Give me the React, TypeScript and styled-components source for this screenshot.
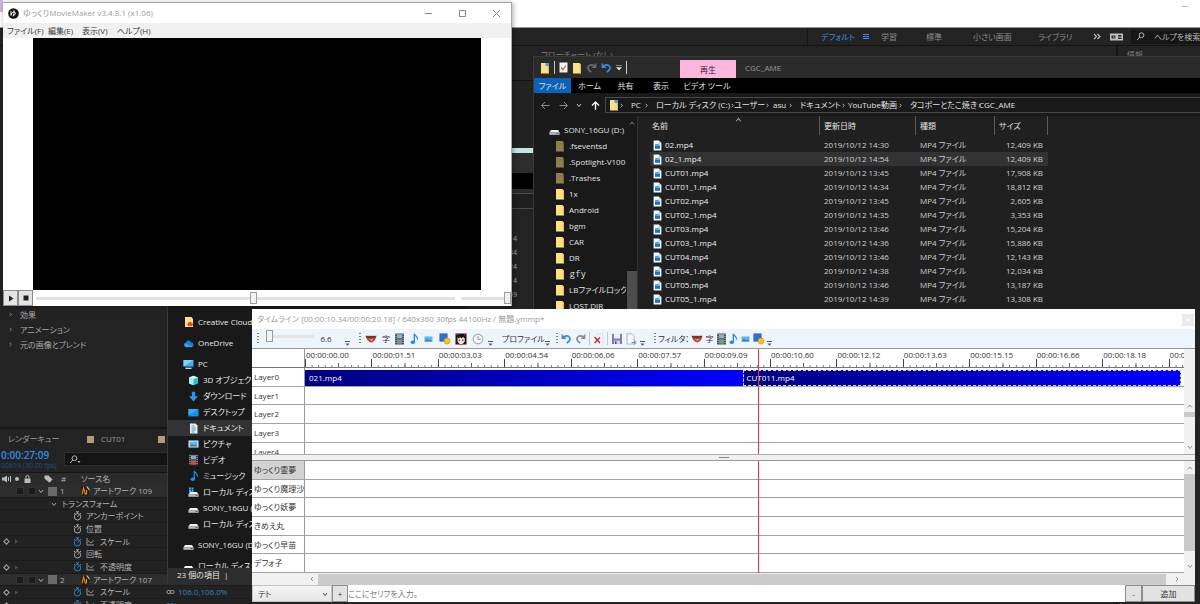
import React from "react";
import styled, { createGlobalStyle, css } from "styled-components";

const Global = createGlobalStyle`
  *, *::before, *::after { box-sizing: border-box; }
  body { margin: 0; background: #1b1b1b; }
  body, button, input, select, table {
    font-family: "Open Sans", "Noto Sans CJK JP", sans-serif;
    font-size: 8px;
    line-height: 12px;
    font-feature-settings: "palt";
  }
  button, input, select { margin: 0; padding: 0; border: 0; border-radius: 0; color: inherit; background: none; }
  ul, ol { margin: 0; padding: 0; list-style: none; }
  h1, h2 { margin: 0; font-size: inherit; font-weight: 400; }
  svg { display: block; flex: none; }
`;

/* ---------- desktop ---------- */

const Desktop = styled.main`
  position: relative;
  height: 100vh;
  min-height: 560px;
  overflow: hidden;
  background: #232323;
  white-space: nowrap;
`;

/* ---------- compositing application ---------- */

const Studio = styled.section`
  display: flex;
  flex-direction: column;
  height: 100%;
  color: #9a9a9a;
`;

const StudioTitle = styled.header`
  display: flex;
  flex: none;
  justify-content: space-between;
  height: 28px;
  padding-right: 12px;
  background: #fff;
  border-bottom: 1px solid #8f9a94;
`;

const StudioMark = styled.span`
  width: 3px;
  height: 12px;
  background: #cdb8dc;
`;

const MinimizeMark = styled.span`
  width: 6px;
  height: 1px;
  margin-top: 6px;
  background: #b5b5b5;
`;

const WorkspaceBar = styled.nav`
  display: flex;
  flex: none;
  align-items: center;
  justify-content: flex-end;
  height: 18px;
  background: #232323;
  border-bottom: 1px solid #141414;
`;

const Workspace = styled.button<{ $w: number; $active?: boolean }>`
  display: flex;
  align-items: center;
  gap: 8px;
  width: ${(p) => p.$w}px;
  color: ${(p) => (p.$active ? "#3a8ee6" : "#8c8c8c")};
`;

const WorkspaceDivider = styled.span`
  width: 1px;
  height: 17px;
  margin-right: 13px;
  background: #171717;
`;

const HelpSearch = styled.label`
  display: flex;
  align-items: center;
  gap: 6px;
  width: 69px;
  height: 14px;
  padding-left: 5px;
  background: #161616;
  color: #b4b4b4;
  input { width: 48px; outline: 0; }
  input::placeholder { color: #b4b4b4; opacity: 1; }
`;

const StudioBody = styled.div`
  display: flex;
  flex: 1;
  min-height: 0;
`;

const StudioLeft = styled.div`
  display: flex;
  flex: none;
  flex-direction: column;
  width: 252px;
`;

const EffectPanel = styled.ul`
  flex: none;
  height: 383px;
  padding: 261px 0 0 8px;
  border-bottom: 2px solid #151515;
  li {
    display: flex;
    align-items: center;
    gap: 7px;
    height: 15px;
    color: #a8a8a8;
  }
`;

const CompTabs = styled.div`
  display: flex;
  flex: none;
  align-items: center;
  height: 20px;
  padding-left: 8px;
`;

const CompTab = styled.span<{ $w: number }>`
  display: flex;
  align-items: center;
  gap: 7px;
  width: ${(p) => p.$w}px;
`;

const Swatch = styled.i`
  width: 7px;
  height: 7px;
  background: #b39b78;
`;

const TimeHead = styled.div`
  display: flex;
  flex: none;
  height: 23px;
`;

const TimeCode = styled.div`
  width: 64px;
  padding-left: 1px;
  font-size: 10px;
  font-weight: 600;
  line-height: 13px;
  color: #2f8fe8;
  small {
    display: block;
    font-size: 7px;
    font-weight: 400;
    line-height: 8px;
    color: #1f4f80;
  }
`;

const LayerSearch = styled.label`
  display: flex;
  align-items: center;
  width: 104px;
  height: 14px;
  margin-top: 3px;
  padding-left: 4px;
  background: #141414;
  border: 1px solid #2e2e2e;
  color: #b4b4b4;
  input { width: 80px; outline: 0; }
`;

const LayerHeader = styled.div`
  display: flex;
  flex: none;
  align-items: center;
  height: 13px;
  padding-left: 2px;
  background: #2b2b2b;
  border-top: 1px solid #151515;
  color: #b0b0b0;
`;

const HeadCell = styled.span<{ $w: number }>`
  display: flex;
  width: ${(p) => p.$w}px;
`;

const LayerList = styled.ul`
  display: grid;
  grid-auto-rows: 13px 12px 13px;
  color: #b4b4b4;
`;

const LayerItem = styled.li<{ $indent: number; $solid?: boolean }>`
  display: flex;
  align-items: center;
  padding-left: 2px;
  background: ${(p) => (p.$solid ? "#2d2d2d" : "#222")};
  border-bottom: 1px solid #1b1b1b;
`;

const KeyCell = styled.span<{ $w: number }>`
  display: flex;
  flex: none;
  align-items: center;
  gap: 4px;
  width: ${(p) => p.$w}px;
`;

const LayerName = styled.span`
  width: 66px;
`;

const LayerValue = styled.span`
  display: flex;
  align-items: center;
  gap: 3px;
  color: #2f80c8;
`;

const Box = styled.i`
  width: 8px;
  height: 8px;
  background: #1c1c1c;
  border: 1px solid #333;
`;

const LayerColor = styled.i`
  width: 9px;
  height: 9px;
  background: #6a6a6a;
`;

const CompViewer = styled.div`
  flex: 1;
  min-width: 0;
`;

const FlowTab = styled.div`
  height: 35px;
  padding: 3px 0 0 289px;
  color: #7d7d7d;
  border-bottom: 1px solid #121212;
`;

const Band = styled.div<{ $h: number; $c: string }>`
  height: ${(p) => p.$h}px;
  background: ${(p) => p.$c};
`;

const Frames = styled.ul`
  width: 265px;
  padding-top: 24px;
  text-align: right;
  li { height: 14px; font-size: 7px; color: #a8a8a8; }
`;

const InfoPanel = styled.div`
  width: 84px;
  padding: 3px 0 0 9px;
  border-left: 2px solid #151515;
  color: #7d7d7d;
`;

/* ---------- file explorers ---------- */

const Explorer = styled.section`
  position: absolute;
  top: 56px;
  right: 0;
  left: 533px;
  height: 254px;
  display: flex;
  flex-direction: column;
  overflow: hidden;
  background: #191919;
  border-top: 1px solid #3a3a3a;
  border-left: 1px solid #3a3a3a;
  color: #e2e2e2;
`;

const ExplorerTitle = styled.header`
  display: flex;
  flex: none;
  align-items: center;
  height: 21px;
  background: #2b2b2b;
`;

const QuickAccess = styled.div`
  display: flex;
  align-items: center;
  gap: 4px;
  width: 146px;
  padding-left: 6px;
`;

const ContextTab = styled.span`
  align-self: flex-end;
  width: 56px;
  height: 18px;
  line-height: 19px;
  text-align: center;
  background: #ffb6dc;
  color: #33202b;
`;

const FolderTitle = styled.h2`
  padding-left: 9px;
  color: #9a9a9a;
`;

const Ribbon = styled.nav`
  display: flex;
  flex: none;
  height: 15px;
  background: #000;
`;

const RibbonTab = styled.button<{ $w: number; $file?: boolean }>`
  width: ${(p) => p.$w}px;
  background: ${(p) => (p.$file ? "#0a63b8" : "none")};
  text-align: center;
`;

const AddressRow = styled.div`
  display: flex;
  flex: none;
  align-items: center;
  height: 16px;
  margin: 4px 0 3px;
`;

const NavArrows = styled.div`
  display: flex;
  align-items: center;
  justify-content: space-between;
  width: 71px;
  padding: 0 5px 0 7px;
`;

const Address = styled.ol`
  display: flex;
  flex: 1;
  align-items: center;
  height: 16px;
  padding-left: 3px;
  border: 1px solid #484848;
  border-right: 0;
`;

const Crumb = styled.li<{ $w: number }>`
  display: flex;
  flex: none;
  align-items: center;
  justify-content: space-between;
  width: ${(p) => p.$w}px;
  padding-right: 7px;
  a { color: inherit; text-decoration: none; }
`;

const ExplorerBody = styled.div`
  display: flex;
  flex: 1;
  min-height: 0;
`;

const Tree = styled.div`
  display: flex;
  flex: none;
  width: 104px;
  border-right: 1px solid #303030;
`;

const TreeList = styled.ul`
  width: 92px;
  padding-top: 6px;
  overflow: hidden;
`;

const TreeItem = styled.li<{ $indent: number; $gap?: boolean; $on?: boolean }>`
  display: flex;
  align-items: center;
  gap: 4px;
  height: 16px;
  margin-top: ${(p) => (p.$gap ? 5 : 0)}px;
  padding-left: ${(p) => p.$indent}px;
  background: ${(p) => (p.$on ? "#333" : "none")};
`;

const TreeScroll = styled.div`
  display: flex;
  flex-direction: column;
  justify-content: space-between;
  align-items: center;
  width: 11px;
  padding-top: 4px;
  color: #8a8a8a;
`;

const TreeThumb = styled.i`
  width: 10px;
  height: 39px;
  background: #4d4d4d;
`;

const FilePane = styled.div`
  flex: 1;
  padding-left: 12px;
  background: #202020;
`;

const FileTable = styled.table`
  width: 398px;
  table-layout: fixed;
  border-collapse: collapse;
  td, th { padding: 0; text-align: left; font-weight: 400; }
  th { height: 22px; vertical-align: top; }
  td { height: 14px; color: #cfcfcf; padding-left: 4px; }
  td:first-child { padding-left: 3px; color: #ececec; }
  td:last-child { text-align: right; padding: 0 5px 0 0; }
`;

const HeadLabel = styled.div<{ $first?: boolean }>`
  position: relative;
  height: 19px;
  padding: 4px 0 0 ${(p) => (p.$first ? 2 : 4)}px;
  border-right: 1px solid #5a5a5a;
`;

const SortMark = styled.span`
  position: absolute;
  top: 0;
  left: 50%;
  color: #a0a0a0;
`;

const FileRow = styled.tr<{ $on?: boolean }>`
  background: ${(p) => (p.$on ? "#333" : "none")};
`;

const FileName = styled.span`
  display: flex;
  align-items: center;
  gap: 3px;
`;

const SideExplorer = styled.section`
  position: absolute;
  top: 300px;
  bottom: 21px;
  left: 167px;
  width: 300px;
  display: flex;
  flex-direction: column;
  background: #191919;
  border-left: 1px solid #3a3a3a;
  color: #e6e6e6;
`;

const SideList = styled.ul`
  flex: 1;
  min-height: 0;
  padding-top: 9px;
  overflow: hidden;
`;

const StatusBar = styled.footer`
  flex: none;
  height: 15px;
  padding-left: 9px;
  line-height: 14px;
  background: #2d2d2d;
`;

/* ---------- player window ---------- */

const Player = styled.section`
  position: absolute;
  top: 2px;
  left: 3px;
  width: 509px;
  display: flex;
  flex-direction: column;
  background: #fff;
  border: 1px solid #a8a8a8;
  border-bottom: 0;
  border-left: 0;
  box-shadow: 1px 1px 5px rgba(0, 0, 0, 0.35);
`;

const PlayerTitle = styled.header`
  display: flex;
  align-items: center;
  gap: 4px;
  height: 20px;
  padding: 0 9px 0 5px;
  color: #9b9b9b;
  h1 { flex: 1; }
`;

const WindowButton = styled.button`
  display: grid;
  width: 30px;
  height: 20px;
  place-items: center;
  color: #888;
  &:last-child { margin-right: -9px; }
`;

const MenuBar = styled.nav`
  display: flex;
  height: 15px;
  padding-left: 4px;
  background: #f0f0f0;
  color: #3a3a3a;
`;

const MenuButton = styled.button<{ $w: number }>`
  width: ${(p) => p.$w}px;
  text-align: left;
`;

const Stage = styled.div`
  height: 252px;
  margin: 0 30px;
  background: #000;
`;

const Transport = styled.div`
  display: flex;
  align-items: center;
  height: 16px;
  background: #fff;
`;

const SquareButton = styled.button`
  display: grid;
  width: 15px;
  height: 16px;
  place-items: center;
  background: #e4e4e4;
  border: 1px solid #8d8d8d;
`;

const Slider = styled.input<{ $h?: number }>`
  appearance: none;
  min-width: 0;
  height: 14px;
  outline: 0;
  &::-webkit-slider-runnable-track {
    height: 3px;
    background: #e3e3e3;
  }
  &::-webkit-slider-thumb {
    appearance: none;
    width: 7px;
    height: 12px;
    margin-top: -5px;
    background: #f2f2f2;
    border: 1px solid #9c9c9c;
  }
`;

const SeekSlider = styled(Slider)`
  flex: 1;
  margin-left: 3px;
`;

const VolumeSlider = styled(Slider)`
  width: 50px;
  margin-left: 6px;
`;

/* ---------- timeline window ---------- */

const Timeline = styled.section`
  position: absolute;
  top: 309px;
  right: 5px;
  bottom: 2px;
  left: 252px;
  display: flex;
  flex-direction: column;
  background: #fff;
  color: #333;
`;

const TimelineTitle = styled.header`
  display: flex;
  flex: none;
  align-items: center;
  justify-content: space-between;
  height: 20px;
  padding: 0 1px 1px 5px;
  color: #9b9b9b;
`;

const CloseButton = styled.button`
  display: grid;
  place-items: center;
  width: 12px;
  height: 12px;
  margin-top: 2px;
  background: #e9e9e9;
  color: #f8f8f8;
`;

const Toolbar = styled.div`
  display: flex;
  flex: none;
  height: 19px;
  background: #edf4fc;
`;

const ToolGroup = styled.div<{ $w: number }>`
  display: flex;
  flex: none;
  align-items: center;
  justify-content: space-between;
  width: ${(p) => p.$w}px;
  padding: 0 4px 0 5px;
`;

const Grip = styled.i`
  width: 2px;
  height: 12px;
  background: repeating-linear-gradient(#7a7f88 0 1px, transparent 1px 3px);
`;

const ToolButton = styled.button`
  display: grid;
  place-items: center;
  height: 14px;
  color: #333;
`;

const ToolRule = styled.i`
  width: 1px;
  height: 13px;
  background: #c3c8ce;
`;

const More = styled.span`
  align-self: flex-end;
  margin-bottom: 2px;
`;

const ZoomSlider = styled(Slider)`
  width: 48px;
  margin-top: -4px;
`;

const Pane = styled.div<{ $fill?: boolean }>`
  position: relative;
  display: flex;
  ${(p) => (p.$fill ? css`flex: 1; min-height: 0;` : css`flex: none; height: 106px;`)}
  overflow: hidden;
  border-top: 1px solid #999;
`;

const Tracks = styled.div`
  position: relative;
  flex: 1;
  min-width: 0;
  overflow: hidden;
`;

const RulerRow = styled.div`
  display: flex;
  height: 19px;
  border-bottom: 1px solid #777;
  overflow: hidden;
`;

const LabelCell = styled.div<{ $on?: boolean }>`
  flex: none;
  width: 53px;
  padding: 3px 0 0 2px;
  border-right: 1px solid #9a9a9a;
  background: ${(p) => (p.$on ? "#d2d2d2" : "#fff")};
  overflow: hidden;
`;

const Ruler = styled.div`
  display: grid;
  flex: 1;
  grid-template-columns: repeat(14, 1fr);
  min-width: 0;
  margin-right: -51px;
`;

const RulerMark = styled.span`
  min-width: 0;
  padding-left: 1px;
  color: #333;
  background:
    linear-gradient(90deg, #444 1px, transparent 1px) 0 100% / 100% 8px repeat-x,
    linear-gradient(90deg, #666 1px, transparent 1px) 0 100% / 50% 4px repeat-x,
    linear-gradient(90deg, #777 1px, transparent 1px) 0 100% / 10% 2px repeat-x;
`;

const Rows = styled.div`
  display: grid;
  grid-auto-rows: 19px 18px 19px;
`;

const Row = styled.div`
  display: flex;
  border-bottom: 1px solid #a3a3a3;
`;

const Lane = styled.div`
  display: flex;
  flex: 1;
  padding: 2px 3px 0 0;
`;

const Clip = styled.button<{ $dashed?: boolean }>`
  flex: 1;
  padding-left: ${(p) => (p.$dashed ? 3 : 4)}px;
  text-align: left;
  color: #fff;
  background: linear-gradient(90deg, #00007f, #0000ff);
  ${(p) => p.$dashed && css`border: 1px dashed #d8d8ff;`}
`;

const PlayArea = styled.div`
  position: absolute;
  top: 0;
  right: 0;
  bottom: 0;
  left: 53px;
  pointer-events: none;
`;

const Playhead = styled.i`
  position: absolute;
  top: 0;
  bottom: 0;
  left: 51.5%;
  width: 1px;
  background: #e8323c;
`;

const VScroll = styled.div`
  display: flex;
  flex: none;
  flex-direction: column;
  align-items: center;
  width: 11px;
  padding: 4px 0;
  background: #f0f0f0;
  color: #8a8a8a;
`;

const VThumb = styled.i<{ $h: number }>`
  width: 11px;
  height: ${(p) => p.$h}px;
  margin: 3px 0 auto;
  background: #c9c9c9;
`;

const Splitter = styled.div`
  display: grid;
  place-items: center;
  flex: none;
  height: 6px;
  background: #f0f0f0;
  border-top: 1px solid #aaa;
  i { width: 10px; height: 1px; background: #888; }
`;

const HScroll = styled.div`
  display: flex;
  flex: none;
  align-items: center;
  justify-content: space-between;
  height: 12px;
  padding: 0 15px 0 57px;
  background: #f0f0f0;
  color: #8a8a8a;
`;

const HThumb = styled.i`
  flex: 1;
  height: 11px;
  margin: 0 8px 0 3px;
  background: #cbcbcb;
`;

const Composer = styled.form`
  display: flex;
  flex: none;
  height: 17px;
  background: #fff;
`;

const VoiceBox = styled.label`
  position: relative;
  width: 80px;
  select {
    appearance: none;
    width: 100%;
    height: 17px;
    padding-left: 5px;
    background: linear-gradient(#f4f4f4, #e6e6e6);
    border: 1px solid #c4c4c4;
  }
  svg { position: absolute; top: 6px; right: 4px; }
`;

const FormButton = styled.button<{ $w: number }>`
  width: ${(p) => p.$w}px;
  background: #e2e2e2;
  border: 1px solid #8d8d8d;
  text-align: center;
`;

const SerifInput = styled.input`
  flex: 1;
  min-width: 0;
  outline: 0;
  &::placeholder { color: #777; opacity: 1; }
`;

/* ---------- icons ---------- */

const Chevron = ({ dir, size = 6 }: { dir: "up" | "down" | "left" | "right"; size?: number }) => {
  const d = { up: "M1 4.5 3 2 5 4.5", down: "M1 2 3 4.5 5 2", left: "M4 1 2 3 4 5", right: "M2 1 4 3 2 5" }[dir];
  return (
    <svg width={size} height={size} viewBox="0 0 6 6" fill="none" stroke="currentColor" strokeWidth="0.9">
      <path d={d} />
    </svg>
  );
};

const Magnifier = ({ menu }: { menu?: boolean }) => (
  <svg width="12" height="9" viewBox="0 0 12 9" fill="none" stroke="currentColor">
    <circle cx="5.5" cy="3.2" r="2.4" />
    <path d="M3.8 5 1.2 8" />
    {menu && <path d="M8.5 6h3L10 8z" fill="currentColor" stroke="none" />}
  </svg>
);

const YuBadge = () => (
  <svg width="11" height="11" viewBox="0 0 11 11">
    <circle cx="5.5" cy="5.5" r="5.3" fill="#111" />
    <path d="M3 3.2v4.2c.2-2 1.2-3.4 3-3.4s2.4 3-.6 3M5.8 2.5c.5 2 .3 4-.8 5.8" fill="none" stroke="#fff" strokeWidth="1" />
  </svg>
);

const Folder = ({ dim, page }: { dim?: boolean; page?: boolean }) => (
  <svg width="10" height="12" viewBox="0 0 10 12">
    <path d="M1 1h6.5L9 3v8.4H1z" fill={dim ? "#8d7f4f" : "#ffe08a"} />
    <path d="M7.5 1 9 3v8.4l-1.2-1z" fill={dim ? "#77693d" : "#eebf4c"} />
    {page && <path d="M5.5 1H9v3H5.5z" fill="#3ea1e0" />}
  </svg>
);

const Drive = ({ win }: { win?: boolean }) => (
  <svg width="11" height="11" viewBox="0 0 11 11">
    {win && <path d="M1 .5h2v2H1zM3.5.5h2v2h-2zM1 3h2v2H1zM3.5 3h2v2h-2z" fill="#27b5f5" />}
    <path d="M2 5h7l1.6 2.6H.4z" fill="#f1f1f1" />
    <path d="M.4 7.4h10.2v2.4H.4z" fill="#bcbcbc" />
    <path d="M7.5 8.2h2v.8h-2z" fill="#444" />
  </svg>
);

const VideoFile = () => (
  <svg width="9" height="11" viewBox="0 0 9 11">
    <path d="M.6.5h5.2l2.6 2.6v7.4H.6z" fill="#f4f8fb" />
    <path d="M5.8.5v2.6h2.6z" fill="#a9c6dc" />
    <path d="M2 4.5 6.5 3.6v1L2 5.3z" fill="#2a86cf" />
    <path d="M2 5.4h5v3.4H2z" fill="#1673c4" />
  </svg>
);

const CloudFolder = () => (
  <svg width="10" height="12" viewBox="0 0 10 12">
    <path d="M1 1h6.5L9 3v8H1z" fill="#ffe08a" />
    <path d="M4.5 6.5c1-1.4 2.8-.9 3 .2 1.8-.1 1.9 3.3 0 3.3H5c-1.8 0-1.9-2.5-.5-3.5z" fill="#e04a26" />
  </svg>
);

const OneDrive = () => (
  <svg width="11" height="9" viewBox="0 0 11 9">
    <path d="M3 8.2a2.6 2.6 0 0 1 0-4.8C4 1 7 .8 7.9 3.3c3.3.1 3.5 4.9.3 4.9z" fill="#1482d8" />
    <path d="M2 4 9.5 8H3A2.4 2.4 0 0 1 2 4z" fill="#35a8f0" />
  </svg>
);

const Computer = () => (
  <svg width="11" height="11" viewBox="0 0 11 11">
    <path d="M.5 1h10v6.6H.5z" fill="#35b3f2" />
    <path d="M.5 1h10L.5 7.6z" fill="#7cd3fb" />
    <path d="M2.5 8.6h6v1.4h-6z" fill="#c0d3de" />
  </svg>
);

const Cube = () => (
  <svg width="11" height="11" viewBox="0 0 11 11">
    <path d="M1 2.5 5.5.7 10 2.5v6L5.5 10.3 1 8.500z" fill="#32bcd0" />
    <path d="M1 2.500 5.5 4v6.300L1 8.500z" fill="#a5f0f2" />
    <path d="M1 2.500 5.500.7 10 2.500 5.500 4z" fill="#d9fbfb" />
  </svg>
);

const Download = () => (
  <svg width="11" height="11" viewBox="0 0 11 11">
    <path d="M3.8.8h3.400v4.400h2.800L5.500 10.400 1 5.200h2.800z" fill="#3391f0" />
  </svg>
);

const Screen = () => (
  <svg width="11" height="11" viewBox="0 0 11 11">
    <path d="M.5 2h10v7.400H.5z" fill="#1494e8" />
    <path d="M.5 2h10L.5 8z" fill="#35aff5" />
  </svg>
);

const DocPage = () => (
  <svg width="11" height="11" viewBox="0 0 11 11">
    <path d="M2 .5h5.500L9.500 2.500v8H2z" fill="#e8f1f7" />
    <path d="M3.500 3h3M3.500 5h4.500M3.500 7h4.500M3.500 9h3" stroke="#4e94c4" />
  </svg>
);

const Photo = () => (
  <svg width="11" height="10" viewBox="0 0 11 10">
    <path d="M.5 1.500h10v7H.5z" fill="#e9f4fb" />
    <path d="M1.500 2.500h8v5h-8z" fill="#5db8ea" />
    <path d="M1.500 7.500 4 4.800l2 1.700 1.500-1 2 2z" fill="#3a7fa8" />
  </svg>
);

const Film = ({ plain }: { plain?: boolean }) => (
  <svg width="11" height="12" viewBox="0 0 11 12">
    <path d="M1 .5h9v11H1z" fill={plain ? "#48525c" : "#343434"} />
    <path d="M3 1.300h5v4H3z" fill={plain ? "#8fb4c6" : "#7fa9d8"} />
    <path d="M3 6.300h5v4.400H3z" fill={plain ? "#7b9a8c" : "#b4584e"} />
    <path d="M1.900 1v10M9.100 1v10" stroke="#e0e0e0" strokeWidth=".8" strokeDasharray="1 1" />
  </svg>
);

const Note = () => (
  <svg width="9" height="12" viewBox="0 0 9 12">
    <ellipse cx="2.800" cy="9.300" rx="2.200" ry="1.800" fill="#1d8be8" />
    <path d="M4.300 9.300V.8c.4 2 3.800 2.400 3.300 5.800" fill="none" stroke="#1d8be8" strokeWidth="1.300" />
  </svg>
);

const Mouth = () => (
  <svg width="12" height="8" viewBox="0 0 12 8">
    <path d="M.5.800h11C11 4.500 8.500 7.500 6.500 7.400 4 7.500 1.500 5 .5.800z" fill="#b84e3e" />
    <path d="M.5.800 4 1.500l2-.6 2 .6L11.500.800l-2 1.900h-7z" fill="#5e2c28" />
    <path d="M4 4.200h4.500L6.800 6z" fill="#e89b86" />
  </svg>
);

const Shapes = () => (
  <svg width="12" height="12" viewBox="0 0 12 12">
    <path d="M.8.800h7.400v7.400H.8z" fill="#2f6fe0" stroke="#1c4aa8" strokeWidth=".6" />
    <circle cx="8" cy="8" r="3" fill="#ffc21a" stroke="#c98500" strokeWidth=".6" />
  </svg>
);

const Face = () => (
  <svg width="12" height="12" viewBox="0 0 12 12">
    <path d="M.5.500h11v11H.5z" fill="#1d1414" />
    <path d="M2.500 4.500 4 5.500 5 4l1.500 1.400L8 4l1.800 1.500v3L7.500 11h-3L2.500 8.500z" fill="#fbe0d2" />
    <path d="M3.600 6.500h1.200v1.400H3.600zM7.200 6.500h1.200v1.400H7.200z" fill="#702020" />
    <path d="M1 1.500 3 .6v2zM11 1.500 9 .6v2zM4.500 11h3v.5h-3z" fill="#d8282c" />
  </svg>
);

const Clock = () => (
  <svg width="12" height="12" viewBox="0 0 12 12">
    <circle cx="6" cy="6" r="4.900" fill="#f3f6fa" stroke="#a5adb8" strokeWidth="1.100" />
    <path d="M6 2.800V6.300H8.800" fill="none" stroke="#8b94a3" />
  </svg>
);

const Turn = ({ color, flip }: { color: string; flip?: boolean }) => (
  <svg width="11" height="11" viewBox="0 0 11 11">
    <g transform={flip ? "matrix(-1 0 0 1 11 0)" : undefined}>
      <path d="M3 3.800c3.200-2 6.200-.4 6 2.200-.1 1.800-1.500 3-3.300 4" fill="none" stroke={color} strokeWidth="1.700" />
      <path d="M.6.800v5.200h5z" fill={color} />
    </g>
  </svg>
);

const DeleteMark = () => (
  <svg width="11" height="11" viewBox="0 0 11 11">
    <path d="M1.500 4 7 10M7 4.500 1.500 10" stroke="#c8222a" strokeWidth="1.300" />
    <path d="M4 1h6v9.500" fill="none" stroke="#b8bec8" strokeDasharray="1 1.500" />
  </svg>
);

const Disk = () => (
  <svg width="12" height="12" viewBox="0 0 12 12">
    <path d="M1 1h10v10H1z" fill="#8a76b4" />
    <path d="M3 1h6v4.500H3z" fill="#f1f1f6" />
    <path d="M3 7.500h6V11H3z" fill="#cfd3e4" />
    <path d="M4 8.300h1.500V11H4z" fill="#5a4a86" />
  </svg>
);

const ExportPage = () => (
  <svg width="11" height="12" viewBox="0 0 11 12">
    <path d="M1 .8h5l2.200 2.200v8H1z" fill="#f7f9fc" stroke="#9aa6ba" strokeWidth=".8" />
    <path d="M5.500 9.500h3.500M8 7.500l2.200 2-2.200 2" fill="none" stroke="#6d86b8" />
  </svg>
);

const MoreMark = () => (
  <svg width="5" height="5" viewBox="0 0 5 5">
    <path d="M0 .5h5" stroke="#555" />
    <path d="M.5 2.500h4L2.500 4.800z" fill="#555" />
  </svg>
);

const Arrow = ({ dir, bright }: { dir: "left" | "right" | "up"; bright?: boolean }) => (
  <svg width="9" height="9" viewBox="0 0 9 9" fill="none" stroke={bright ? "#f4f4f4" : "#8e8e8e"} strokeWidth={bright ? 1.400 : 1}>
    <path d={{ left: "M8.500 4.500h-8M4 1 .7 4.500 4 8", right: "M.5 4.500h8M5 1l3.300 3.500L5 8", up: "M4.500 8.800V1M1 4.500 4.500 1 8 4.500" }[dir]} />
  </svg>
);

const CheckPage = () => (
  <svg width="9" height="11" viewBox="0 0 9 11">
    <path d="M.5.500h8v10h-8z" fill="#f3f3f3" />
    <path d="M2 5.500 4 7.500 7 3.500" fill="none" stroke="#d05a3a" strokeWidth="1.200" />
  </svg>
);

const Stopwatch = ({ on }: { on?: boolean }) => (
  <svg width="9" height="10" viewBox="0 0 9 10" fill="none" stroke={on ? "#2f80c8" : "#a8a8a8"}>
    <circle cx="4.500" cy="5.800" r="3.200" />
    <path d="M3 .800h3M4.500 1v1.500M1 2l1 1M8 2 7 3M4.500 5.800 6 4.200" />
  </svg>
);

const Graph = () => (
  <svg width="8" height="8" viewBox="0 0 8 8" fill="none" stroke="#9a9a9a">
    <path d="M1 0v7h7M2 3c2 0 2 2 3 2s1-2 2.500-2.500" />
  </svg>
);

const KeyNav = () => (
  <svg width="18" height="7" viewBox="0 0 18 7">
    <path d="M4.500.800 7.200 3.500 4.500 6.200 1.800 3.500z" fill="none" stroke="#9a9a9a" strokeWidth="1.100" />
    <path d="M13 1.500v4L16 3.500z" fill="#555" />
  </svg>
);

const ArtFile = () => (
  <svg width="10" height="10" viewBox="0 0 10 10">
    <path d="M1 .500h5.500L9 3v6.500H1z" fill="#2a1a08" />
    <path d="M2 8.500 3.500 2l2 6.500M6.500 4v4.500" fill="none" stroke="#f08a1c" strokeWidth="1.100" />
    <path d="M6 .500h1.500L9.500 3v2z" fill="#b9c6cf" />
  </svg>
);

const LinkMark = () => (
  <svg width="9" height="6" viewBox="0 0 9 6" fill="none" stroke="#a0a0a0">
    <ellipse cx="2.800" cy="3" rx="2" ry="1.600" />
    <ellipse cx="6.200" cy="3" rx="2" ry="1.600" />
  </svg>
);

/* ---------- data ---------- */

const files: [string, string, string][] = [
  ["02.mp4", "14:30", "12,409 KB"],
  ["02_1.mp4", "14:54", "12,409 KB"],
  ["CUT01.mp4", "13:45", "17,908 KB"],
  ["CUT01_1.mp4", "14:34", "18,812 KB"],
  ["CUT02.mp4", "13:45", "2,605 KB"],
  ["CUT02_1.mp4", "14:35", "3,353 KB"],
  ["CUT03.mp4", "13:46", "15,204 KB"],
  ["CUT03_1.mp4", "14:36", "15,886 KB"],
  ["CUT04.mp4", "13:46", "12,143 KB"],
  ["CUT04_1.mp4", "14:38", "12,034 KB"],
  ["CUT05.mp4", "13:46", "13,187 KB"],
  ["CUT05_1.mp4", "14:39", "13,308 KB"],
];

const folders = [".fseventsd", ".Spotlight-V100", ".Trashes", "1x", "Android", "bgm", "CAR", "DR", "ｇｆｙ", "LBファイルロック2_E", "LOST.DIR"];

const crumbs: [string, number][] = [
  ["PC", 25],
  ["ローカル ディスク (C:)", 78],
  ["ユーザー", 39],
  ["asu", 27],
  ["ドキュメント", 48],
  ["YouTube動画", 62],
  ["タコポーとたこ焼き", 69],
];

const places: { name: string; icon: React.ReactNode; indent: number; gap?: boolean; on?: boolean }[] = [
  { name: "Creative Cloud Files", icon: <CloudFolder />, indent: 16, gap: true },
  { name: "OneDrive", icon: <OneDrive />, indent: 15, gap: true },
  { name: "PC", icon: <Computer />, indent: 15, gap: true },
  { name: "3D オブジェクト", icon: <Cube />, indent: 20 },
  { name: "ダウンロード", icon: <Download />, indent: 20 },
  { name: "デスクトップ", icon: <Screen />, indent: 20 },
  { name: "ドキュメント", icon: <DocPage />, indent: 20, on: true },
  { name: "ピクチャ", icon: <Photo />, indent: 20 },
  { name: "ビデオ", icon: <Film />, indent: 20 },
  { name: "ミュージック", icon: <Note />, indent: 22 },
  { name: "ローカル ディスク (C:)", icon: <Drive win />, indent: 20 },
  { name: "SONY_16GU (D:)", icon: <Drive />, indent: 20 },
  { name: "ローカル ディスク (E:)", icon: <Drive />, indent: 20 },
  { name: "SONY_16GU (D:)", icon: <Drive />, indent: 15, gap: true },
  { name: "ローカル ディスク (E:)", icon: <Drive />, indent: 15, gap: true },
];

type Layer = { name: string; kind: "art" | "group" | "prop" | "keyed"; num?: number; value?: string; link?: boolean };
const layers: Layer[] = [
  { name: "アートワーク 109", kind: "art", num: 1 },
  { name: "トランスフォーム", kind: "group" },
  { name: "アンカーポイント", kind: "prop" },
  { name: "位置", kind: "prop" },
  { name: "スケール", kind: "keyed" },
  { name: "回転", kind: "prop" },
  { name: "不透明度", kind: "keyed" },
  { name: "アートワーク 107", kind: "art", num: 2 },
  { name: "スケール", kind: "keyed", value: "106.0,106.0%", link: true },
  { name: "不透明度", kind: "keyed", value: "0%" },
];

const marks = ["00.00", "01.51", "03.03", "04.54", "06.06", "07.57", "09.09", "10.60", "12.12", "13.63", "15.15", "16.66", "18.18", "19.69"];
const voices = ["ゆっくり霊夢", "ゆっくり魔理沙", "ゆっくり妖夢", "きめえ丸", "ゆっくり早苗", "デフォ子"];

/* ---------- parts ---------- */

const LayerLine = ({ layer }: { layer: Layer }) => (
  <LayerItem $indent={0} $solid={layer.kind === "art"}>
    {layer.kind === "art" && (
      <>
        <KeyCell $w={36}><KeyCell $w={10} /><Box /><Box /></KeyCell>
        <KeyCell $w={22}><Chevron dir="down" /><LayerColor /></KeyCell>
        <KeyCell $w={20}>{layer.num}</KeyCell>
        <KeyCell $w={13}><ArtFile /></KeyCell>
      </>
    )}
    {layer.kind === "group" && <><KeyCell $w={49} /><KeyCell $w={11}><Chevron dir="down" /></KeyCell></>}
    {layer.kind === "prop" && <><KeyCell $w={71} /><KeyCell $w={13}><Stopwatch /></KeyCell></>}
    {layer.kind === "keyed" && <><KeyCell $w={71}><KeyNav /></KeyCell><KeyCell $w={27}><Stopwatch on /><Graph /></KeyCell></>}
    <LayerName>{layer.name}</LayerName>
    {layer.value && <LayerValue>{layer.link && <LinkMark />}{layer.value}</LayerValue>}
  </LayerItem>
);

const StudioApp = () => (
  <Studio>
    <StudioTitle><StudioMark /><MinimizeMark /></StudioTitle>
    <WorkspaceBar>
      <WorkspaceDivider />
      <Workspace $w={60} $active>デフォルト
        <svg width="6" height="7" viewBox="0 0 6 7" stroke="currentColor"><path d="M0 1.500h6M0 3.500h6M0 5.500h6" /></svg>
      </Workspace>
      <Workspace $w={45}>学習</Workspace>
      <Workspace $w={47}>標準</Workspace>
      <Workspace $w={65}>小さい画面</Workspace>
      <Workspace $w={55}>ライブラリ</Workspace>
      <Workspace $w={17} aria-label="その他">
        <svg width="8" height="7" viewBox="0 0 8 7" fill="none" stroke="#bbb" strokeWidth="1.200"><path d="M1 1l2.500 2.500L1 6M4.500 1 7 3.500 4.500 6" /></svg>
      </Workspace>
      <Workspace $w={21} aria-label="パネル">
        <svg width="13" height="8" viewBox="0 0 13 8"><path d="M0 .500h13v7H0z" fill="#c0c0c0" /><path d="M1.500 2.500h4v3h-4zM8 2h3.500v1.500H8zM8 4.500h3.500V6H8z" fill="#2a2a2a" /><path d="M3 3.500h1.500v1H3z" fill="#ccc" /></svg>
      </Workspace>
      <HelpSearch><Magnifier /><input placeholder="ヘルプを検索" aria-label="ヘルプを検索" /></HelpSearch>
    </WorkspaceBar>
    <StudioBody>
      <StudioLeft>
        <EffectPanel>
          {["効果", "アニメーション", "元の画像とブレンド"].map((t) => <li key={t}><Chevron dir="right" size={5} />{t}</li>)}
        </EffectPanel>
        <CompTabs>
          <CompTab $w={79}>レンダーキュー</CompTab>
          <CompTab $w={71}><Swatch />CUT01</CompTab>
          <CompTab $w={10}><Swatch /></CompTab>
        </CompTabs>
        <TimeHead>
          <TimeCode>0:00:27:09<small>00819 (30.00 fps)</small></TimeCode>
          <LayerSearch><Magnifier menu /><input aria-label="レイヤーを検索" /></LayerSearch>
        </TimeHead>
        <LayerHeader>
          <HeadCell $w={12}><svg width="10" height="8" viewBox="0 0 10 8"><path d="M0 2.500h2L5 .500v7L2 5.500H0z" fill="#bbb" /><path d="M6.500 2v4M8.500 1v6" stroke="#bbb" /></svg></HeadCell>
          <HeadCell $w={10}><svg width="6" height="8" viewBox="0 0 6 8"><circle cx="3" cy="4" r="2" fill="#bbb" /></svg></HeadCell>
          <HeadCell $w={20}><svg width="7" height="8" viewBox="0 0 7 8"><path d="M.5 3.500h6V8h-6z" fill="#bbb" /><path d="M2 3.500V2a1.500 1.500 0 0 1 3 0v1.500" fill="none" stroke="#bbb" /></svg></HeadCell>
          <HeadCell $w={17}><svg width="9" height="8" viewBox="0 0 9 8"><path d="M.5.500h4L8.500 4.500 5.500 7.800.5 3.500z" fill="#bbb" /></svg></HeadCell>
          <HeadCell $w={20}>#</HeadCell>
          ソース名
        </LayerHeader>
        <LayerList>{layers.map((l, i) => <LayerLine key={i} layer={l} />)}</LayerList>
      </StudioLeft>
      <CompViewer>
        <FlowTab>フローチャート (なし)</FlowTab>
        <Band $h={67} $c="#222" />
        <Band $h={5} $c="#bfe8e4" />
        <Band $h={20} $c="#2d2d2d" />
        <Band $h={16} $c="#000" />
        <Band $h={4} $c="#2b2b2b" />
        <Band $h={1} $c="#4a4a4a" />
        <Band $h={14} $c="#1f1f1f" />
        <Band $h={1} $c="#4a4a4a" />
        <Frames>{["14", "34", "24", "14", "59"].map((t, i) => <li key={i}>{t}</li>)}</Frames>
      </CompViewer>
      <InfoPanel>情報</InfoPanel>
    </StudioBody>
  </Studio>
);

const FileExplorer = () => (
  <Explorer>
    <ExplorerTitle>
      <QuickAccess>
        <Folder page /><ToolRule /><CheckPage /><Folder />
        <Turn color="#6c6c6c" flip /><Turn color="#3a8ee6" />
        <svg width="6" height="6" viewBox="0 0 6 6"><path d="M0 .500h6M.5 2.500h5L3 5.200z" fill="#ddd" stroke="#ddd" strokeWidth=".5" /></svg>
        <ToolRule />
      </QuickAccess>
      <ContextTab>再生</ContextTab>
      <FolderTitle>CGC_AME</FolderTitle>
    </ExplorerTitle>
    <Ribbon>
      <RibbonTab $w={37} $file>ファイル</RibbonTab>
      <RibbonTab $w={37}>ホーム</RibbonTab>
      <RibbonTab $w={35}>共有</RibbonTab>
      <RibbonTab $w={36}>表示</RibbonTab>
      <RibbonTab $w={56}>ビデオ ツール</RibbonTab>
    </Ribbon>
    <AddressRow>
      <NavArrows><Arrow dir="left" /><Arrow dir="right" /><Chevron dir="down" /><Arrow dir="up" bright /></NavArrows>
      <Address>
        <Crumb $w={22}><Folder page /><Chevron dir="right" size={5} /></Crumb>
        {crumbs.map(([t, w]) => <Crumb key={t} $w={w}><a href="#folder">{t}</a><Chevron dir="right" size={5} /></Crumb>)}
        <Crumb $w={50}><a href="#folder">CGC_AME</a></Crumb>
      </Address>
    </AddressRow>
    <ExplorerBody>
      <Tree>
        <TreeList>
          <TreeItem $indent={15}><Drive />SONY_16GU (D:)</TreeItem>
          {folders.map((f, i) => <TreeItem key={f} $indent={21}><Folder dim={i < 3} />{f}</TreeItem>)}
        </TreeList>
        <TreeScroll><Chevron dir="up" /><TreeThumb /></TreeScroll>
      </Tree>
      <FilePane>
        <FileTable>
          <colgroup><col style={{ width: 170 }} /><col style={{ width: 96 }} /><col style={{ width: 79 }} /><col /></colgroup>
          <thead>
            <tr>
              <th><HeadLabel $first>名前<SortMark><Chevron dir="up" size={7} /></SortMark></HeadLabel></th>
              <th><HeadLabel>更新日時</HeadLabel></th>
              <th><HeadLabel>種類</HeadLabel></th>
              <th><HeadLabel>サイズ</HeadLabel></th>
            </tr>
          </thead>
          <tbody>
            {files.map(([name, time, size], i) => (
              <FileRow key={name} $on={i === 1}>
                <td><FileName><VideoFile />{name}</FileName></td>
                <td>2019/10/12 {time}</td>
                <td>MP4 ファイル</td>
                <td>{size}</td>
              </FileRow>
            ))}
          </tbody>
        </FileTable>
      </FilePane>
    </ExplorerBody>
  </Explorer>
);

const PlayerWindow = () => (
  <Player>
    <PlayerTitle>
      <YuBadge />
      <h1>ゆっくりMovieMaker v3.4.8.1 (x1.06)</h1>
      <WindowButton aria-label="最小化"><svg width="7" height="7" viewBox="0 0 7 7" stroke="currentColor"><path d="M0 3.500h7" /></svg></WindowButton>
      <WindowButton aria-label="最大化"><svg width="7" height="7" viewBox="0 0 7 7" fill="none" stroke="currentColor"><path d="M.5.500h6v6h-6z" /></svg></WindowButton>
      <WindowButton aria-label="閉じる"><svg width="7" height="7" viewBox="0 0 7 7" stroke="currentColor"><path d="M0 0l7 7M7 0 0 7" /></svg></WindowButton>
    </PlayerTitle>
    <MenuBar>
      <MenuButton $w={41}>ファイル(F)</MenuButton>
      <MenuButton $w={34}>編集(E)</MenuButton>
      <MenuButton $w={35}>表示(V)</MenuButton>
      <MenuButton $w={40}>ヘルプ(H)</MenuButton>
    </MenuBar>
    <Stage />
    <Transport>
      <SquareButton aria-label="再生"><svg width="6" height="7" viewBox="0 0 6 7"><path d="M1 .500v6l4.500-3z" fill="#222" /></svg></SquareButton>
      <SquareButton aria-label="停止"><svg width="6" height="6" viewBox="0 0 6 6"><path d="M.5.500h5v5h-5z" fill="#222" /></svg></SquareButton>
      <SeekSlider type="range" aria-label="再生位置" defaultValue={52} />
      <VolumeSlider type="range" aria-label="音量" defaultValue={100} />
    </Transport>
  </Player>
);

const MediaTools = () => (
  <>
    <ToolButton aria-label="ボイス"><Mouth /></ToolButton>
    <ToolButton>字</ToolButton>
    <ToolButton aria-label="動画"><Film plain /></ToolButton>
    <ToolButton aria-label="音声"><Note /></ToolButton>
    <ToolButton aria-label="画像"><Photo /></ToolButton>
    <ToolButton aria-label="図形"><Shapes /></ToolButton>
  </>
);

const TimelineWindow = () => (
  <Timeline>
    <TimelineTitle>
      <h2>タイムライン [00:00:10.34/00:00:20.18] / 640x360 30fps 44100Hz / 無題.ymmp*</h2>
      <CloseButton aria-label="閉じる"><svg width="6" height="6" viewBox="0 0 6 6" stroke="currentColor"><path d="M0 0l6 6M6 0 0 6" /></svg></CloseButton>
    </TimelineTitle>
    <Toolbar>
      <ToolGroup $w={102}><Grip /><ZoomSlider type="range" aria-label="拡大率" defaultValue={0} /><span>6.6</span><span /><More><MoreMark /></More></ToolGroup>
      <ToolGroup $w={143}><Grip /><MediaTools /><ToolButton aria-label="立ち絵"><Face /></ToolButton><ToolButton aria-label="時間"><Clock /></ToolButton><More><MoreMark /></More></ToolGroup>
      <ToolGroup $w={54}><Grip /><ToolButton>プロファイル</ToolButton><More><MoreMark /></More></ToolGroup>
      <ToolGroup $w={98}>
        <Grip />
        <ToolButton aria-label="元に戻す"><Turn color="#3a86d8" /></ToolButton>
        <ToolButton aria-label="やり直し"><Turn color="#8c8c8c" flip /></ToolButton>
        <ToolRule />
        <ToolButton aria-label="削除"><DeleteMark /></ToolButton>
        <ToolRule />
        <ToolButton aria-label="保存"><Disk /></ToolButton>
        <ToolButton aria-label="書き出し"><ExportPage /></ToolButton>
        <More><MoreMark /></More>
      </ToolGroup>
      <ToolGroup $w={127}><Grip /><span>フィルタ：</span><MediaTools /><More><MoreMark /></More></ToolGroup>
    </Toolbar>
    <Pane>
      <Tracks>
        <RulerRow>
          <LabelCell />
          <Ruler>{marks.map((m) => <RulerMark key={m}>00:00:{m}</RulerMark>)}</Ruler>
        </RulerRow>
        <Rows>
          {[0, 1, 2, 3, 4].map((n) => (
            <Row key={n}>
              <LabelCell>Layer{n}</LabelCell>
              <Lane>{n === 0 && <><Clip>021.mp4</Clip><Clip $dashed>CUT011.mp4</Clip></>}</Lane>
            </Row>
          ))}
        </Rows>
        <PlayArea><Playhead /></PlayArea>
      </Tracks>
      <VScroll><VThumb as="span" $h={19} style={{ visibility: "hidden" }} /><Chevron dir="up" /><VThumb $h={5} /><Chevron dir="down" /></VScroll>
    </Pane>
    <Splitter><i /></Splitter>
    <Pane $fill>
      <Tracks>
        <Rows>
          {voices.map((v, i) => <Row key={v}><LabelCell $on={i === 0}>{v}</LabelCell><Lane /></Row>)}
        </Rows>
        <PlayArea><Playhead /></PlayArea>
      </Tracks>
      <VScroll><Chevron dir="up" /><VThumb $h={77} /><Chevron dir="down" /></VScroll>
    </Pane>
    <HScroll><Chevron dir="left" /><HThumb /><Chevron dir="right" /></HScroll>
    <Composer onSubmit={(e) => e.preventDefault()}>
      <VoiceBox><select aria-label="ボイス"><option>テト</option></select><Chevron dir="down" /></VoiceBox>
      <FormButton type="button" $w={16}>+</FormButton>
      <SerifInput placeholder="ここにセリフを入力。" aria-label="セリフ" />
      <FormButton type="button" $w={17}>-</FormButton>
      <FormButton $w={53}>追加</FormButton>
    </Composer>
  </Timeline>
);

export default function App() {
  return (
    <Desktop lang="ja">
      <Global />
      <StudioApp />
      <SideExplorer>
        <SideList>
          {places.map((p, i) => <TreeItem key={i} $indent={p.indent} $gap={p.gap} $on={p.on}>{p.icon}{p.name}</TreeItem>)}
        </SideList>
        <StatusBar>23 個の項目 &nbsp;|</StatusBar>
      </SideExplorer>
      <FileExplorer />
      <PlayerWindow />
      <TimelineWindow />
    </Desktop>
  );
}
